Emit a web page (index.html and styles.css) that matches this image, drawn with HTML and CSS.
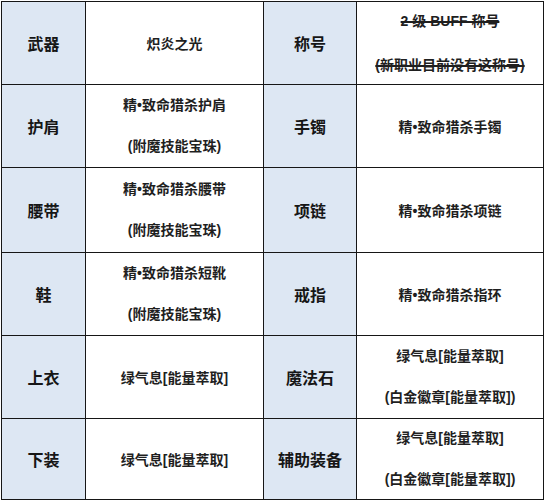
FILE: index.html
```html
<!DOCTYPE html>
<html lang="zh">
<head>
<meta charset="utf-8">
<link rel="stylesheet" href="styles.css">
</head>
<body>
<div class="grid">
  <div class="cell label">武器</div>
  <div class="cell value">炽炎之光</div>
  <div class="cell label">称号</div>
  <div class="cell value two strike"><span>2 级 BUFF 称号</span><span>(新职业目前没有这称号)</span></div>

  <div class="cell label">护肩</div>
  <div class="cell value two"><span>精•致命猎杀护肩</span><span>(附魔技能宝珠)</span></div>
  <div class="cell label">手镯</div>
  <div class="cell value">精•致命猎杀手镯</div>

  <div class="cell label">腰带</div>
  <div class="cell value two"><span>精•致命猎杀腰带</span><span>(附魔技能宝珠)</span></div>
  <div class="cell label">项链</div>
  <div class="cell value">精•致命猎杀项链</div>

  <div class="cell label">鞋</div>
  <div class="cell value two"><span>精•致命猎杀短靴</span><span>(附魔技能宝珠)</span></div>
  <div class="cell label">戒指</div>
  <div class="cell value">精•致命猎杀指环</div>

  <div class="cell label">上衣</div>
  <div class="cell value">绿气息[能量萃取]</div>
  <div class="cell label">魔法石</div>
  <div class="cell value two"><span>绿气息[能量萃取]</span><span>(白金徽章[能量萃取])</span></div>

  <div class="cell label">下装</div>
  <div class="cell value">绿气息[能量萃取]</div>
  <div class="cell label">辅助装备</div>
  <div class="cell value two"><span>绿气息[能量萃取]</span><span>(白金徽章[能量萃取])</span></div>
</div>
</body>
</html>
```
FILE: styles.css
```css
html, body {
  margin: 0;
  padding: 0;
  background: #ffffff;
}
body {
  font-family: "Liberation Sans", "Noto Sans CJK SC", sans-serif;
  color: #1e1e1e;
}
.grid {
  margin: 1px 0 0 1px;
  width: 543px;
  box-sizing: border-box;
  display: grid;
  grid-template-columns: 83px 177px 92px 186px;
  grid-template-rows: 82px 82px 84px 82px 82px 80px;
  gap: 1px;
  padding: 1px;
  background: #161616;
}
.cell {
  background: #ffffff;
  display: flex;
  flex-direction: column;
  align-items: center;
  justify-content: center;
  text-align: center;
  font-weight: 700;
}
.label {
  background: #dde7f3;
  font-size: 16px;
  color: #161616;
}
.value {
  font-size: 14px;
  color: #1f1f1f;
}
.two span {
  line-height: 41px;
}
.strike span {
  line-height: 44px;
  text-decoration: line-through;
  text-decoration-thickness: 1.5px;
}
```
